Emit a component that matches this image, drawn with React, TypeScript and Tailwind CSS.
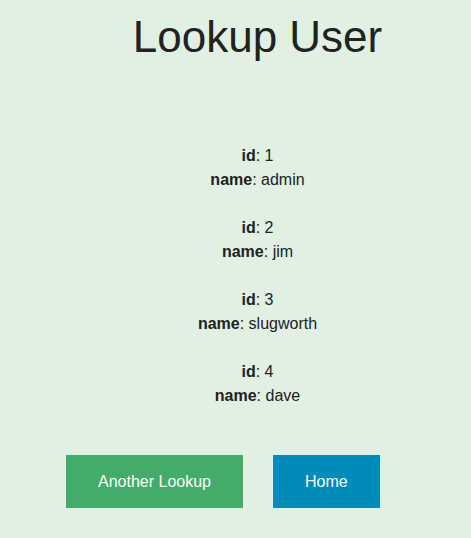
const users = [
  { id: 1, name: 'admin' },
  { id: 2, name: 'jim' },
  { id: 3, name: 'slugworth' },
  { id: 4, name: 'dave' },
];

export default function App() {
  return (
    <div className="min-h-[538px] w-full bg-[#e0f0e3] font-['Liberation_Sans',Arial,sans-serif] text-[#222222]">
      <div className="pl-[44px] pt-[12px] text-center">
        <h1 className="text-[44px] leading-[1.15]">Lookup User</h1>
        <div className="mt-[81px] flex flex-col gap-6 text-base leading-6">
          {users.map((u) => (
            <div key={u.id}>
              <div>
                <b>id</b>: {u.id}
              </div>
              <div>
                <b>name</b>: {u.name}
              </div>
            </div>
          ))}
        </div>
      </div>
      <div className="mt-[47px] flex gap-[30px] pl-[66px]">
        <button className="h-[53px] bg-[#43ac6a] px-8 pt-[2px] text-base text-white">
          Another Lookup
        </button>
        <button className="h-[53px] bg-[#008cba] px-8 pt-[2px] text-base text-white">
          Home
        </button>
      </div>
    </div>
  );
}
